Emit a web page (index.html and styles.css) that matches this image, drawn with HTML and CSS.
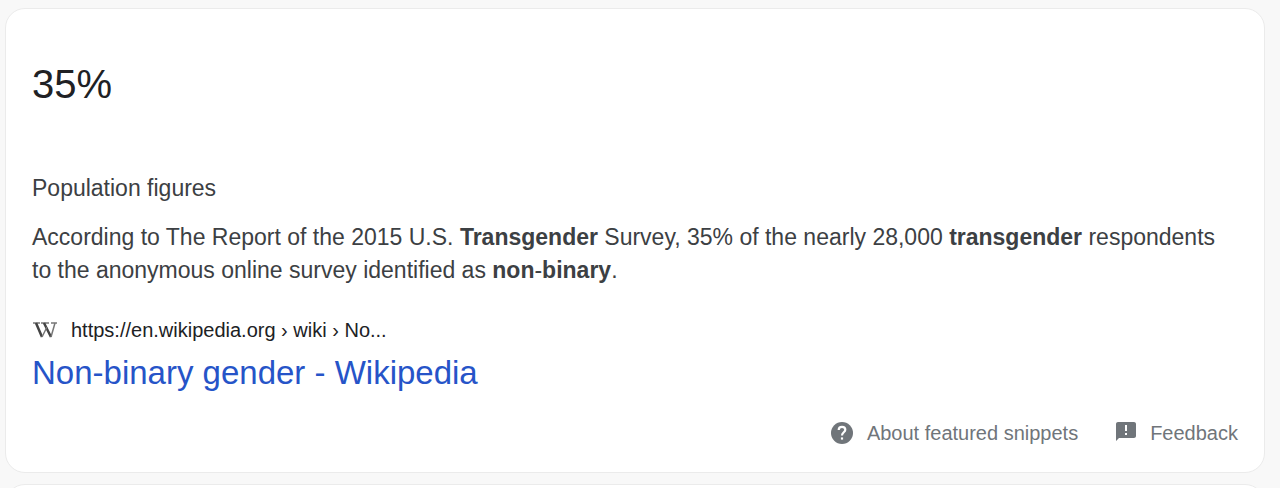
FILE: index.html
```html
<!DOCTYPE html>
<html lang="en">
<head>
    <meta charset="UTF-8">
    <meta name="viewport" content="width=device-width, initial-scale=1.0">
    <title>Non-binary gender</title>
    <link rel="stylesheet" href="styles.css">
</head>
<body>
    <main class="results">
        <section class="card">
            <div class="answer">35%</div>
            <h2 class="heading">Population figures</h2>
            <p class="snippet">According to The Report of the 2015 U.S. <b>Transgender</b> Survey, 35% of the nearly 28,000 <b>transgender</b> respondents to the anonymous online survey identified as <b>non</b>-<b>binary</b>.</p>
            <div class="source">
                <svg class="favicon" viewBox="0 0 26 20" aria-hidden="true">
                    <path d="M1 3h7M9 3h8M19 3h6" stroke="#777" stroke-width="1.5"/>
                    <path d="M4 3l6 14M12 3l7 14" stroke="#444" stroke-width="2.5"/>
                    <path d="M10 17l5-10M19 17l4-14" stroke="#777" stroke-width="1.5"/>
                </svg>
                <cite class="url">https://en.wikipedia.org › wiki › No...</cite>
            </div>
            <a class="title" href="#">Non-binary gender - Wikipedia</a>
            <!-- Card footer links -->
            <div class="footer">
                <a class="footer-link" href="#">
                    <svg class="help-icon" viewBox="2 2 20 20" aria-hidden="true">
                        <circle cx="12" cy="12" r="10" fill="currentColor"/>
                        <path d="M9 9.300c0-1.700 1.300-2.900 3-2.900s3 1.100 3 2.700c0 2.200-3 2.400-3 5.100" fill="none" stroke="#fff" stroke-width="2"/>
                        <path d="M11 16h2v2h-2z" fill="#fff"/>
                    </svg>
                    <span>About featured snippets</span>
                </a>
                <a class="footer-link" href="#">
                    <svg class="feedback-icon" viewBox="2 2 20 20" aria-hidden="true">
                        <path fill="currentColor" d="M20 2H4c-1.1 0-2 .9-2 2v17l3-3h15c1.1 0 2-.9 2-2V4c0-1.1-.9-2-2-2zm-7 13h-2v-2h2v2zm0-4h-2V5h2v6z"/>
                    </svg>
                    <span>Feedback</span>
                </a>
            </div>
        </section>
        <section class="card next"></section>
    </main>
</body>
</html>
```
FILE: styles.css
```css
body {
    margin: 0;
    height: 100vh;
    overflow: hidden;
    font-family: "Liberation Sans", Arial, sans-serif;
    color: #3c4043;
    background-color: #f8f8f8;
}
a {
    text-decoration: none;
}
a:hover {
    text-decoration: underline;
}
svg {
    display: block;
    flex: none;
}
.results {
    display: flex;
    flex-direction: column;
    gap: 11px;
    padding: 8px 15px 0 5px;
}
.card {
    padding: 51px 26px 27px;
    background-color: #fff;
    border: 1px solid #ebebeb;
    border-radius: 20px;
}
.answer {
    font-size: 40px;
    line-height: 48px;
    color: #202124;
}
.heading {
    margin: 64px 0 0;
    font-size: 23px;
    font-weight: 400;
    line-height: 33px;
}
.snippet {
    margin: 16px 0 0;
    font-size: 23px;
    line-height: 33px;
}
.source {
    display: flex;
    align-items: center;
    gap: 13px;
    margin-top: 31px;
}
.favicon {
    width: 26px;
    height: 20px;
    fill: none;
}
.url {
    font-size: 20px;
    font-style: normal;
    line-height: 24px;
    color: #202124;
}
.title {
    display: block;
    margin-top: 11px;
    font-size: 33px;
    line-height: 40px;
    color: #2654c8;
}
.footer {
    display: flex;
    justify-content: flex-end;
    gap: 38px;
    margin-top: 28px;
}
.footer-link {
    display: flex;
    align-items: center;
    gap: 14px;
    font-size: 20px;
    line-height: 24px;
    color: #70757a;
}
.help-icon {
    width: 22px;
    height: 22px;
}
.feedback-icon {
    width: 20px;
    height: 20px;
    margin-bottom: 2px;
}
```
